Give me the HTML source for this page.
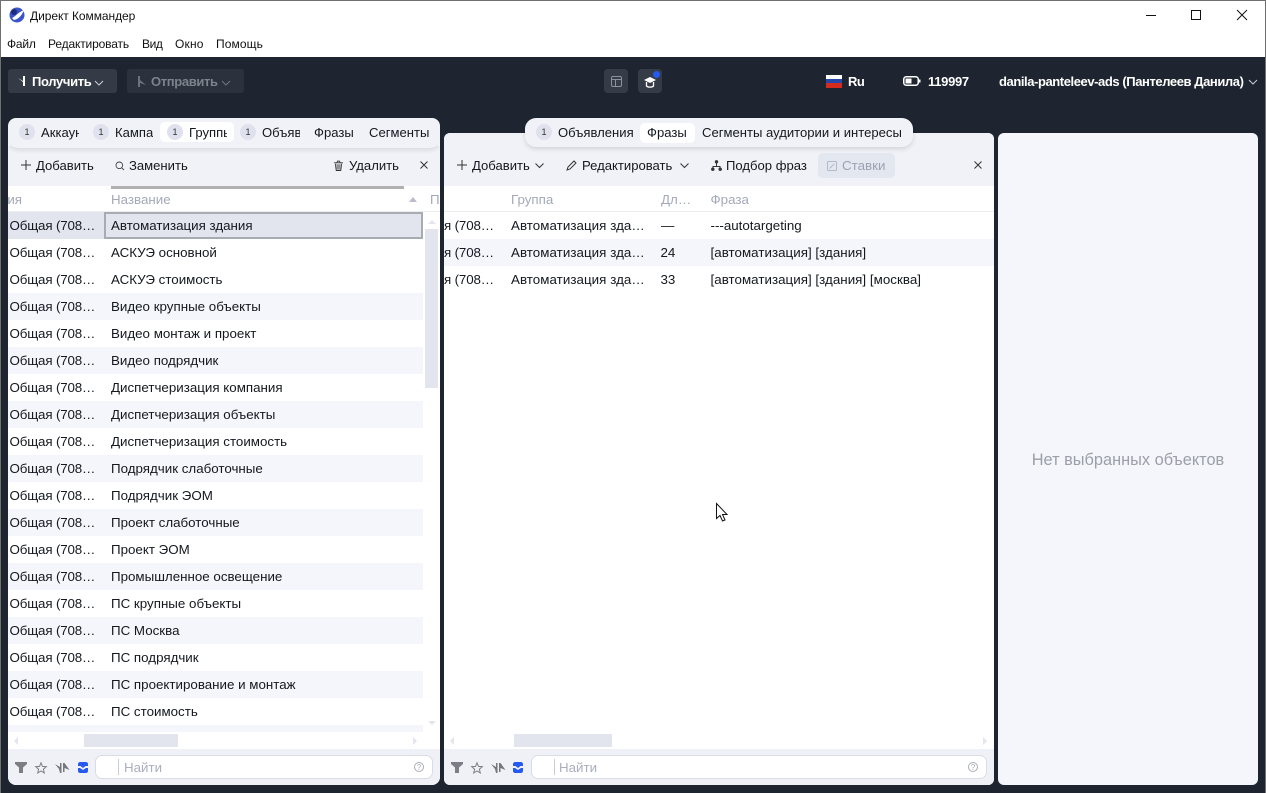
<!DOCTYPE html>
<html lang="ru"><head><meta charset="utf-8"><title>Директ Коммандер</title>
<style>
*{box-sizing:border-box}
html,body{margin:0;padding:0;width:1266px;height:793px;overflow:hidden;background:#1e2530;font-family:"Liberation Sans","Noto Sans CJK SC",sans-serif}
.a{position:absolute}
.t{position:absolute;white-space:nowrap;font-size:13.35px;line-height:16px;color:#14181f}
svg{position:absolute;display:block;overflow:visible}
.sys{font-family:"Liberation Sans",sans-serif;font-size:12px;color:#111}
.b{font-size:13px;font-weight:700}
.tb{font-size:13.08px}
.e{letter-spacing:-.15px}
.row{position:absolute;height:27px}
.alt{background:#f5f6fb}
.badge{position:absolute;width:16px;height:16px;border-radius:8px;background:#dfe2ec;color:#333;font-size:9px;line-height:16px;text-align:center}
.clip{overflow:hidden;display:block}
.hd{color:#a3a9b8}
</style></head><body>
<div class="a" style="left:0;top:0;width:1266px;height:57px;background:#fff"></div>
<div class="a" style="left:0;top:0;width:1266px;height:1px;background:#707070"></div>
<div class="a" style="left:0;top:0;width:1px;height:793px;background:#707070"></div>
<div class="a" style="left:1265px;top:0;width:1px;height:793px;background:#707070"></div>
<svg style="left:9px;top:7px" width="16" height="16" viewBox="0 0 16 16"><circle cx="8" cy="8" r="7.5" fill="#3b55c9"/><path d="M3 11C6 10 8 6 15 3C13 8 10 12 5 13Z" fill="#fff"/><circle cx="5" cy="5" r="3" fill="#1d2c7d"/></svg>
<div class="t sys" style="left:30px;top:8px;letter-spacing:-.06px">Директ Коммандер</div>
<svg style="left:1146px;top:15px" width="10" height="1"><rect width="10" height="1" fill="#111"/></svg>
<svg style="left:1191px;top:10px" width="10" height="10"><rect x=".5" y=".5" width="9" height="9" fill="none" stroke="#111"/></svg>
<svg style="left:1237px;top:10px" width="10" height="10"><path d="M0 0L10 10M10 0L0 10" stroke="#111" fill="none"/></svg>
<div class="t sys" style="left:7px;top:36px;letter-spacing:-.2px">Файл</div>
<div class="t sys" style="left:48px;top:36px;letter-spacing:-.15px">Редактировать</div>
<div class="t sys" style="left:142px;top:36px;letter-spacing:-.4px">Вид</div>
<div class="t sys" style="left:175px;top:36px;letter-spacing:.2px">Окно</div>
<div class="t sys" style="left:216px;top:36px;letter-spacing:.1px">Помощь</div>

<div class="a" style="left:8px;top:69px;width:109px;height:24px;border-radius:3px;background:#353b46"></div>
<svg style="left:18px;top:76px" width="9" height="10" viewBox="0 0 9 10"><path d="M0 2L5 5V0H7V10H5V6Z" fill="#fff"/></svg>
<div class="t b" style="left:32px;top:74px;color:#fff;letter-spacing:-.35px">Получить</div>
<svg style="left:94px;top:80px" width="10" height="6"><path d="M1 1L5 5L9 1" stroke="#ccd" fill="none"/></svg>
<div class="a" style="left:127px;top:69px;width:117px;height:24px;border-radius:3px;background:#2c323d"></div>
<svg style="left:137px;top:76px" width="9" height="11" viewBox="0 0 9 11"><path d="M1 0H3V4L9 9L3 7V11H1Z" fill="#6c717b"/></svg>
<div class="t b" style="left:151px;top:74px;color:#7d828c;letter-spacing:-.35px">Отправить</div>
<svg style="left:221px;top:80px" width="10" height="6"><path d="M1 1L5 5L9 1" stroke="#70757f" fill="none"/></svg>

<div class="a" style="left:604px;top:69px;width:24px;height:24px;border-radius:4px;background:#363c47"></div>
<svg style="left:611px;top:76px" width="11" height="11"><rect x=".5" y=".5" width="10" height="10" rx="1.5" fill="none" stroke="#8d929b"/><path d="M.5 3.5H10.5M4.5 3.5V10.5" stroke="#8d929b" fill="none"/></svg>
<div class="a" style="left:638px;top:69px;width:24px;height:24px;border-radius:4px;background:#363c47"></div>
<svg style="left:643px;top:76px" width="14" height="12" viewBox="0 0 14 12"><path d="M7 1L13 4L7 7L1 4Z" fill="#fff"/><path d="M3.500 6V10C5 11.500 9 11.500 10.500 10V6" fill="none" stroke="#fff" stroke-width="1.300"/></svg>
<div class="a" style="left:653px;top:71px;width:7px;height:7px;border-radius:4px;background:#2659f0"></div>

<div class="a" style="left:826px;top:75px;width:16px;height:4px;background:#fff"></div>
<div class="a" style="left:826px;top:79px;width:16px;height:4px;background:#2348a8"></div>
<div class="a" style="left:826px;top:83px;width:16px;height:5px;background:#d52b1e"></div>
<div class="t b" style="left:848px;top:74px;color:#fff;letter-spacing:-.5px">Ru</div>
<svg style="left:903px;top:76px" width="18" height="10"><rect x=".75" y=".75" width="14.500" height="8.500" rx="2.500" fill="none" stroke="#fff" stroke-width="1.500"/><rect x="2.500" y="2.500" width="6" height="5" fill="#fff"/><rect x="16" y="3.500" width="1.500" height="3" fill="#fff"/></svg>
<div class="t b" style="left:928px;top:74px;color:#fff;letter-spacing:-.3px">119997</div>
<div class="t b" style="left:999px;top:74px;color:#fff;letter-spacing:-.42px">danila-panteleev-ads (Пантелеев Данила)</div>
<svg style="left:1248px;top:79px" width="10" height="6"><path d="M1 1L5 5L9 1" stroke="#ccd" fill="none"/></svg>

<!-- LEFT PANEL -->
<div class="a" id="lp" style="left:8px;top:118px;width:432px;height:667px;background:#fff;border-radius:8px;overflow:hidden">
<div class="a" style="left:0;top:28px;width:432px;height:40px;background:#f0f2f7"></div>
<div class="a" style="left:0;top:0;width:432px;height:30px;background:#f0f2f7;border-radius:10px;box-shadow:0 2px 5px rgba(30,37,48,.12)"></div>
<div class="a" style="left:0;top:631px;width:432px;height:36px;background:#eff1f6"></div>
</div>
<div class="a" style="left:160px;top:122px;width:74px;height:20px;border-radius:5px;background:#fff"></div>
<div class="badge" style="left:19px;top:124px">1</div><div class="t tb clip" style="left:41px;top:125px;width:38px">Аккаунты</div>
<div class="badge" style="left:93px;top:124px">1</div><div class="t tb clip" style="left:115px;top:125px;width:38px">Кампании</div>
<div class="badge" style="left:167px;top:124px">1</div><div class="t tb clip" style="left:189px;top:125px;width:38px">Группы</div>
<div class="badge" style="left:240px;top:124px">1</div><div class="t tb clip" style="left:262px;top:125px;width:38px">Объявления</div>
<div class="t tb" style="left:314px;top:125px">Фразы</div><div class="t tb" style="left:369px;top:125px">Сегменты</div>

<svg style="left:21px;top:160px" width="10" height="10"><path d="M5 0V10M0 5H10" stroke="#333" fill="none"/></svg>
<div class="t tb" style="left:36px;top:158px">Добавить</div>
<svg style="left:115px;top:161px" width="10" height="10"><circle cx="4.300" cy="4.300" r="3.300" fill="none" stroke="#444" stroke-width=".9"/><path d="M6.800 6.800L9 9" stroke="#444" stroke-width=".9"/></svg>
<div class="t tb" style="left:129px;top:158px">Заменить</div>
<svg style="left:334px;top:161px" width="9" height="10" viewBox="0 0 10 11"><path d="M0 2H10M3 2L4 0H6L7 2M1.500 3L2.500 10.500H7.500L8.500 3" fill="none" stroke="#333"/><path d="M2.500 3.500H7.500L7 9.500H3Z" fill="#333" opacity=".5"/></svg>
<div class="t tb" style="left:349px;top:158px">Удалить</div>
<svg style="left:420px;top:161px" width="8" height="8"><path d="M.5 .5L7.500 7.500M7.500 .5L.5 7.500" stroke="#333" fill="none"/></svg>

<div class="a" style="left:111px;top:186px;width:293px;height:3px;background:#b1b1b1"></div>
<div class="t hd" style="left:8px;top:192px;width:14px;overflow:hidden;direction:rtl">ия</div>
<div class="t hd" style="left:111px;top:192px">Название</div>
<svg style="left:409px;top:197px" width="8" height="5"><path d="M4 0L8 5H0Z" fill="#b9bdc9"/></svg>
<div class="t hd clip" style="left:430px;top:192px;width:10px">По</div>
<div class="a" style="left:8px;top:211px;width:432px;height:1px;background:#eceef3"></div>

<div class="row" style="left:8px;top:212px;width:415px;background:#e3e5ee"></div>
<div class="a" style="left:104px;top:212px;width:319px;height:27px;border:2px solid #a9abb3;background:#e3e5ee"></div>
<div class="row alt" style="left:8px;top:293px;width:415px"></div>
<div class="row alt" style="left:8px;top:347px;width:415px"></div>
<div class="row alt" style="left:8px;top:401px;width:415px"></div>
<div class="row alt" style="left:8px;top:455px;width:415px"></div>
<div class="row alt" style="left:8px;top:509px;width:415px"></div>
<div class="row alt" style="left:8px;top:563px;width:415px"></div>
<div class="row alt" style="left:8px;top:617px;width:415px"></div>
<div class="row alt" style="left:8px;top:671px;width:415px"></div>
<div class="a alt" style="left:8px;top:725px;width:415px;height:7px"></div>

<div class="t e" style="left:9.500px;top:218px">Общая (708…</div><div class="t" style="left:111px;top:218px">Автоматизация здания</div>
<div class="t e" style="left:9.500px;top:245px">Общая (708…</div><div class="t" style="left:111px;top:245px">АСКУЭ основной</div>
<div class="t e" style="left:9.500px;top:272px">Общая (708…</div><div class="t" style="left:111px;top:272px">АСКУЭ стоимость</div>
<div class="t e" style="left:9.500px;top:299px">Общая (708…</div><div class="t" style="left:111px;top:299px">Видео крупные объекты</div>
<div class="t e" style="left:9.500px;top:326px">Общая (708…</div><div class="t" style="left:111px;top:326px">Видео монтаж и проект</div>
<div class="t e" style="left:9.500px;top:353px">Общая (708…</div><div class="t" style="left:111px;top:353px">Видео подрядчик</div>
<div class="t e" style="left:9.500px;top:380px">Общая (708…</div><div class="t" style="left:111px;top:380px">Диспетчеризация компания</div>
<div class="t e" style="left:9.500px;top:407px">Общая (708…</div><div class="t" style="left:111px;top:407px">Диспетчеризация объекты</div>
<div class="t e" style="left:9.500px;top:434px">Общая (708…</div><div class="t" style="left:111px;top:434px">Диспетчеризация стоимость</div>
<div class="t e" style="left:9.500px;top:461px">Общая (708…</div><div class="t" style="left:111px;top:461px">Подрядчик слаботочные</div>
<div class="t e" style="left:9.500px;top:488px">Общая (708…</div><div class="t" style="left:111px;top:488px">Подрядчик ЭОМ</div>
<div class="t e" style="left:9.500px;top:515px">Общая (708…</div><div class="t" style="left:111px;top:515px">Проект слаботочные</div>
<div class="t e" style="left:9.500px;top:542px">Общая (708…</div><div class="t" style="left:111px;top:542px">Проект ЭОМ</div>
<div class="t e" style="left:9.500px;top:569px">Общая (708…</div><div class="t" style="left:111px;top:569px">Промышленное освещение</div>
<div class="t e" style="left:9.500px;top:596px">Общая (708…</div><div class="t" style="left:111px;top:596px">ПС крупные объекты</div>
<div class="t e" style="left:9.500px;top:623px">Общая (708…</div><div class="t" style="left:111px;top:623px">ПС Москва</div>
<div class="t e" style="left:9.500px;top:650px">Общая (708…</div><div class="t" style="left:111px;top:650px">ПС подрядчик</div>
<div class="t e" style="left:9.500px;top:677px">Общая (708…</div><div class="t" style="left:111px;top:677px">ПС проектирование и монтаж</div>
<div class="t e" style="left:9.500px;top:704px">Общая (708…</div><div class="t" style="left:111px;top:704px">ПС стоимость</div>

<svg style="left:428px;top:220px" width="8" height="4"><path d="M4 0L8 4H0Z" fill="#e3e5ee"/></svg>
<div class="a" style="left:425px;top:229px;width:13px;height:159px;background:#e3e5ee"></div>
<svg style="left:428px;top:721px" width="8" height="4"><path d="M0 0H8L4 4Z" fill="#e3e5ee"/></svg>
<svg style="left:14px;top:737px" width="4" height="8"><path d="M4 0V8L0 4Z" fill="#e3e5ee"/></svg>
<div class="a" style="left:84px;top:734px;width:94px;height:13px;background:#e3e5ee"></div>
<svg style="left:413px;top:737px" width="4" height="8"><path d="M0 0V8L4 4Z" fill="#e3e5ee"/></svg>

<svg style="left:15px;top:762px" width="12" height="11"><path d="M0 0H12V2L8 5.500V11H4V5.500L0 2Z" fill="#7b7e85"/></svg>
<svg style="left:35px;top:762px" width="12" height="12" viewBox="0 0 12 12"><path d="M6 .8L7.500 4.400L11.300 4.700L8.400 7.200L9.300 11L6 9L2.700 11L3.600 7.200L.7 4.700L4.500 4.400Z" fill="none" stroke="#7b7e85"/></svg>
<svg style="left:55px;top:762px" width="15" height="11"><path d="M0 2L5 5V1H6.500V11H5L4 7ZM8 1H9.500L14.500 8L9.500 6V10H8Z" fill="#74777e"/></svg>
<svg style="left:78px;top:762px" width="10" height="11"><path d="M2 0H8C9 0 10 1 10 2V4H7.500L5 6L2.500 4H0V2C0 1 1 0 2 0ZM0 6H2L5 8L8 6H10V9C10 10 9 11 8 11H2C1 11 0 10 0 9Z" fill="#2659f0"/></svg>
<div class="a" style="left:95px;top:755px;width:338px;height:24px;background:#fff;border:1px solid #d9dde8;border-radius:7px"></div>
<div class="a" style="left:118px;top:759px;width:1px;height:16px;background:#c9cdd8"></div>
<div class="t" style="left:124px;top:760px;color:#a9afc0">Найти</div>
<svg style="left:414px;top:762px" width="10" height="10"><circle cx="5" cy="5" r="4.500" fill="none" stroke="#a9adb8"/><text x="5" y="8" font-size="8" text-anchor="middle" fill="#a9adb8" font-family="Liberation Sans">?</text></svg>

<!-- MIDDLE PANEL -->
<div class="a" style="left:444px;top:133px;width:550px;height:652px;background:#fff;border-radius:6px;overflow:hidden">
<div class="a" style="left:0;top:0;width:550px;height:53px;background:#f0f2f7"></div>
<div class="a" style="left:0;top:616px;width:550px;height:36px;background:#eff1f6"></div>
</div>
<div class="a" style="left:525px;top:118px;width:388px;height:29px;border-radius:11px;background:#f0f2f7;box-shadow:0 2px 5px rgba(30,37,48,.15)"></div>
<div class="a" style="left:640px;top:123px;width:55px;height:20px;border-radius:5px;background:#fff"></div>
<div class="badge" style="left:536px;top:124px">1</div>
<div class="t tb" style="left:558px;top:125px">Объявления</div><div class="t tb" style="left:647px;top:125px">Фразы</div>
<div class="t tb" style="left:702px;top:125px">Сегменты аудитории и интересы</div>

<svg style="left:457px;top:160px" width="10" height="10"><path d="M5 0V10M0 5H10" stroke="#333" fill="none"/></svg>
<div class="t tb" style="left:472px;top:158px">Добавить</div>
<svg style="left:535px;top:163px" width="9" height="5"><path d="M.5 .5L4.500 4.500L8.500 .5" stroke="#333" fill="none"/></svg>
<svg style="left:566px;top:160px" width="11" height="11"><path d="M1 10L2 7L8 1L10 3L4 9Z" fill="none" stroke="#333"/></svg>
<div class="t tb" style="left:582px;top:158px">Редактировать</div>
<svg style="left:680px;top:163px" width="9" height="5"><path d="M.5 .5L4.500 4.500L8.500 .5" stroke="#333" fill="none"/></svg>
<svg style="left:711px;top:160px" width="11" height="11"><path d="M5.500 2V6M2 9.500V6.500H9V9.500" fill="none" stroke="#333"/><circle cx="5.500" cy="1.800" r="1.700" fill="#333"/><circle cx="1.800" cy="9.200" r="1.700" fill="#333"/><circle cx="9.200" cy="9.200" r="1.700" fill="#333"/></svg>
<div class="t tb" style="left:726px;top:158px">Подбор фраз</div>
<div class="a" style="left:818px;top:153px;width:77px;height:25px;border-radius:5px;background:#e3e7f0"></div>
<svg style="left:827px;top:161px" width="10" height="10"><rect x=".5" y=".5" width="9" height="9" rx="1" fill="none" stroke="#b4b9c6"/><path d="M2.500 7.500L5 5L7.500 3" stroke="#b4b9c6" fill="none"/></svg>
<div class="t" style="left:842px;top:158px;color:#9ca2b2">Ставки</div>
<svg style="left:974px;top:161px" width="8" height="8"><path d="M.5 .5L7.500 7.500M7.500 .5L.5 7.500" stroke="#333" fill="none"/></svg>

<div class="t hd" style="left:511px;top:192px">Группа</div>
<div class="t hd" style="left:661px;top:192px">Дл…</div>
<div class="t hd" style="left:710.500px;top:192px">Фраза</div>
<div class="a" style="left:444px;top:211px;width:550px;height:1px;background:#eceef3"></div>
<div class="row alt" style="left:444px;top:239px;width:550px"></div>

<div class="t e" style="left:444px;top:218px">я (708…</div><div class="t" style="left:511px;top:218px;letter-spacing:.05px">Автоматизация зда…</div><div class="t" style="left:661px;top:218px">—</div><div class="t" style="left:710.500px;top:218px">---autotargeting</div>
<div class="t e" style="left:444px;top:245px">я (708…</div><div class="t" style="left:511px;top:245px;letter-spacing:.05px">Автоматизация зда…</div><div class="t" style="left:660.500px;top:245px">24</div><div class="t" style="left:710.500px;top:245px;letter-spacing:.03px">[автоматизация] [здания]</div>
<div class="t e" style="left:444px;top:272px">я (708…</div><div class="t" style="left:511px;top:272px;letter-spacing:.05px">Автоматизация зда…</div><div class="t" style="left:660.500px;top:272px">33</div><div class="t" style="left:710.500px;top:272px;letter-spacing:.03px">[автоматизация] [здания] [москва]</div>

<svg style="left:716px;top:503px" width="12" height="19" viewBox="0 0 12 19"><path d="M.5 .5V15.500L4 12.500L6.500 18L9 17L6.500 11.500H11Z" fill="#fff" stroke="#111"/></svg>

<svg style="left:450px;top:737px" width="4" height="8"><path d="M4 0V8L0 4Z" fill="#e3e5ee"/></svg>
<div class="a" style="left:514px;top:734px;width:98px;height:13px;background:#e3e5ee"></div>
<svg style="left:983px;top:737px" width="4" height="8"><path d="M0 0V8L4 4Z" fill="#e3e5ee"/></svg>

<svg style="left:451px;top:762px" width="12" height="11"><path d="M0 0H12V2L8 5.500V11H4V5.500L0 2Z" fill="#7b7e85"/></svg>
<svg style="left:471px;top:762px" width="12" height="12" viewBox="0 0 12 12"><path d="M6 .8L7.500 4.400L11.300 4.700L8.400 7.200L9.300 11L6 9L2.700 11L3.600 7.200L.7 4.700L4.500 4.400Z" fill="none" stroke="#7b7e85"/></svg>
<svg style="left:491px;top:762px" width="15" height="11"><path d="M0 2L5 5V1H6.500V11H5L4 7ZM8 1H9.500L14.500 8L9.500 6V10H8Z" fill="#74777e"/></svg>
<svg style="left:513px;top:762px" width="10" height="11"><path d="M2 0H8C9 0 10 1 10 2V4H7.500L5 6L2.500 4H0V2C0 1 1 0 2 0ZM0 6H2L5 8L8 6H10V9C10 10 9 11 8 11H2C1 11 0 10 0 9Z" fill="#2659f0"/></svg>
<div class="a" style="left:531px;top:755px;width:456px;height:24px;background:#fff;border:1px solid #d9dde8;border-radius:7px"></div>
<div class="a" style="left:554px;top:759px;width:1px;height:16px;background:#c9cdd8"></div>
<div class="t" style="left:559px;top:760px;color:#a9afc0">Найти</div>
<svg style="left:968px;top:762px" width="10" height="10"><circle cx="5" cy="5" r="4.500" fill="none" stroke="#a9adb8"/><text x="5" y="8" font-size="8" text-anchor="middle" fill="#a9adb8" font-family="Liberation Sans">?</text></svg>

<!-- RIGHT PANEL -->
<div class="a" style="left:998px;top:133px;width:260px;height:652px;background:#f5f6fb;border-radius:6px"></div>
<div class="t" style="left:998px;top:451px;width:260px;text-align:center;font-size:16.35px;line-height:19px;color:#9b9fa8">Нет выбранных объектов</div>
</body></html>
